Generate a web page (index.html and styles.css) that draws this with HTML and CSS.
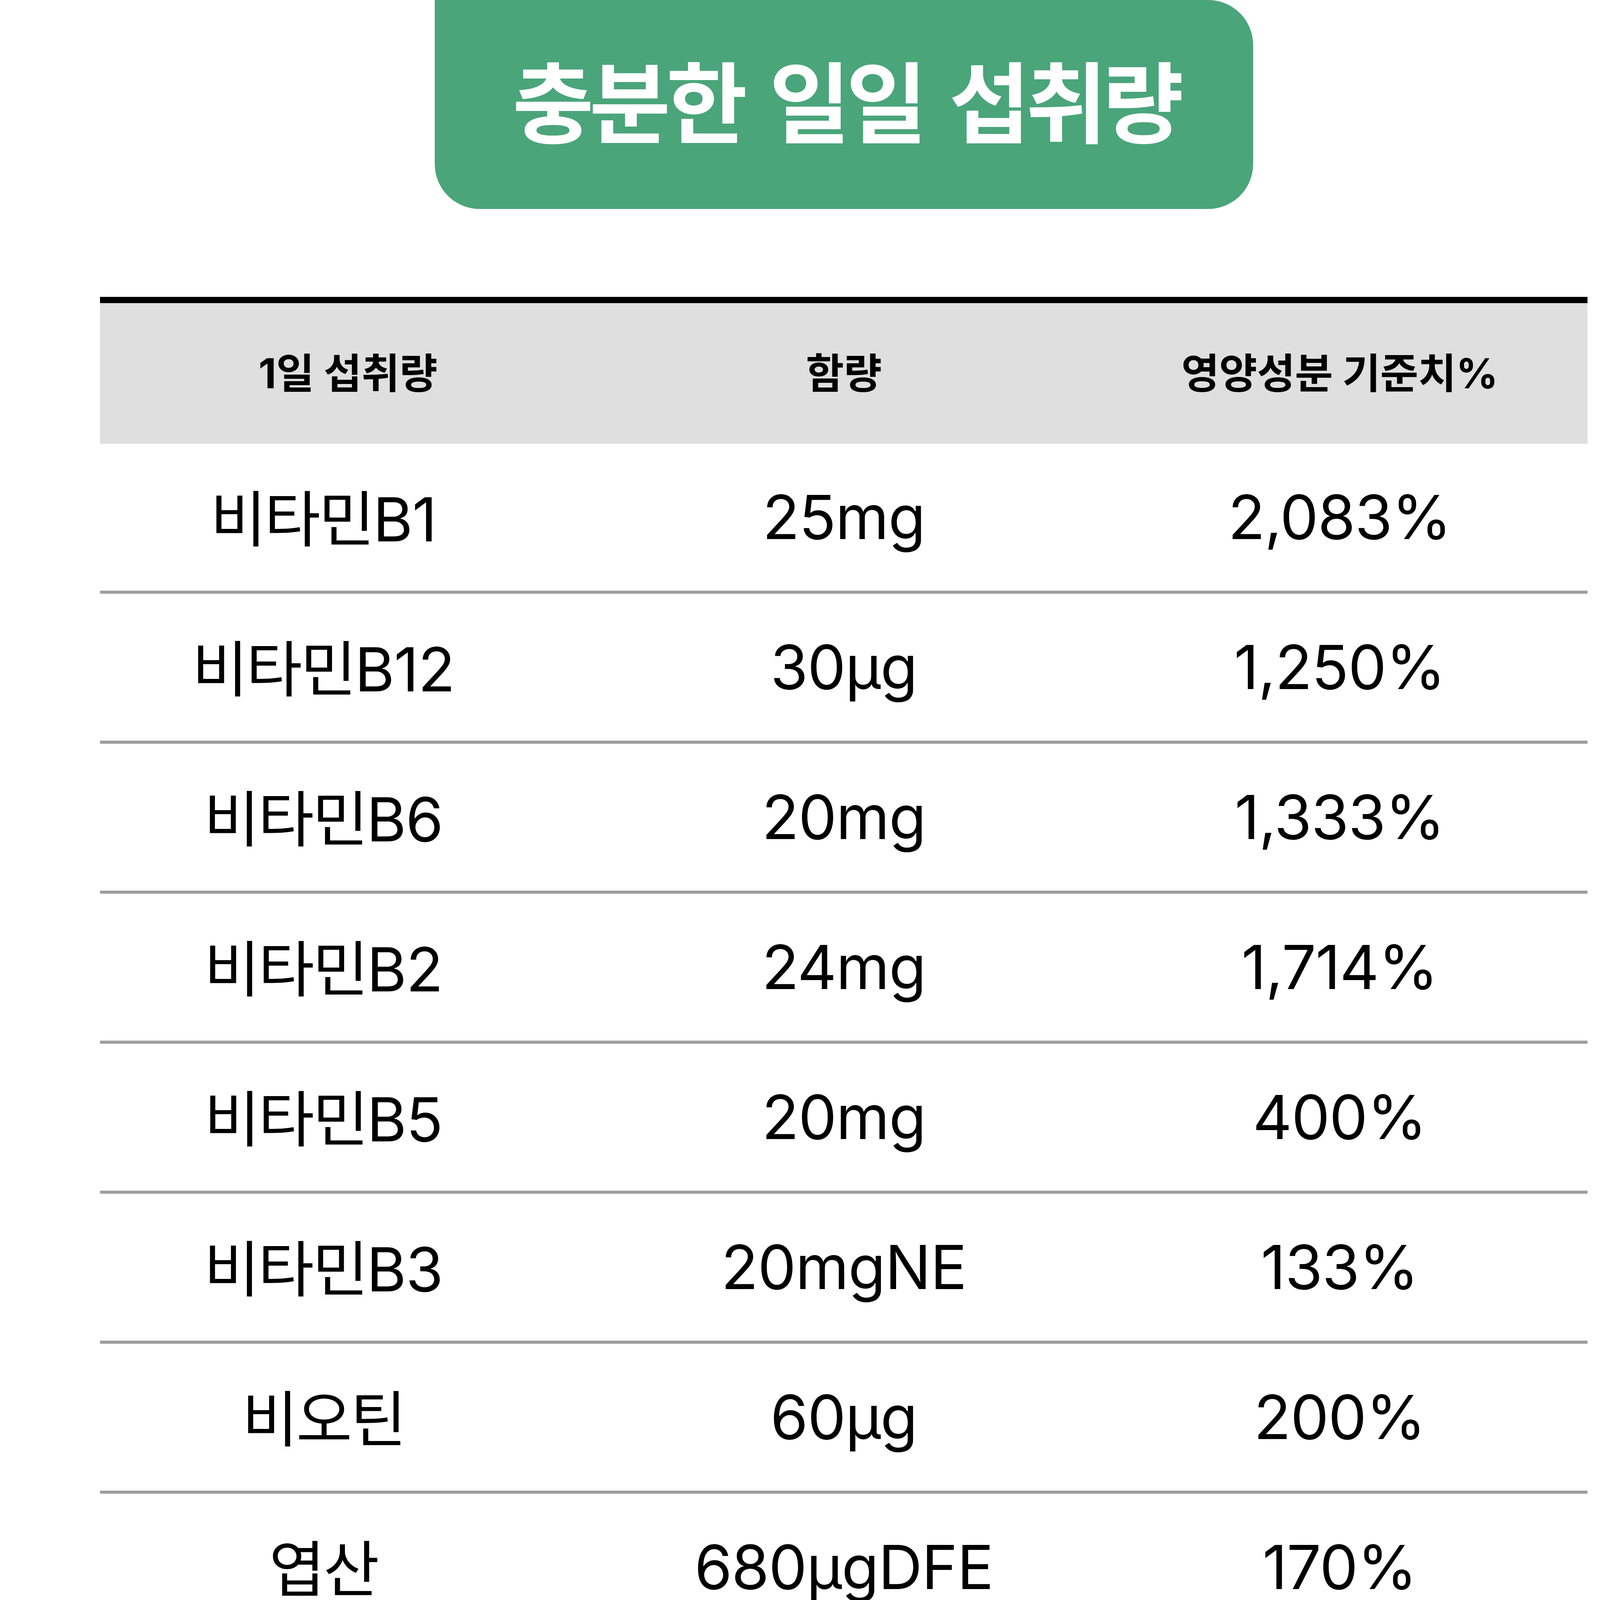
FILE: index.html
```html
<!DOCTYPE html>
<html lang="ko">
<head>
<meta charset="utf-8">
<title>충분한 일일 섭취량</title>
<link rel="stylesheet" href="styles.css">
</head>
<body>
<div class="page">
  <div class="title-wrap">
    <div class="title">충분한 일일 섭취량</div>
  </div>
  <div class="table">
    <div class="head">
      <div class="hc">1일 섭취량</div>
      <div class="hc">함량</div>
      <div class="hc">영양성분 기준치%</div>
    </div>
    <div class="row"><div class="c name"><span class="h">비타민</span>B1</div><div class="c">25mg</div><div class="c">2,083%</div></div>
    <div class="row"><div class="c name"><span class="h">비타민</span>B12</div><div class="c">30μg</div><div class="c">1,250%</div></div>
    <div class="row"><div class="c name"><span class="h">비타민</span>B6</div><div class="c">20mg</div><div class="c">1,333%</div></div>
    <div class="row"><div class="c name"><span class="h">비타민</span>B2</div><div class="c">24mg</div><div class="c">1,714%</div></div>
    <div class="row"><div class="c name"><span class="h">비타민</span>B5</div><div class="c">20mg</div><div class="c">400%</div></div>
    <div class="row"><div class="c name"><span class="h">비타민</span>B3</div><div class="c">20mgNE</div><div class="c">133%</div></div>
    <div class="row"><div class="c name"><span class="h">비오틴</span></div><div class="c">60μg</div><div class="c">200%</div></div>
    <div class="row"><div class="c name"><span class="h">엽산</span></div><div class="c">680μgDFE</div><div class="c">170%</div></div>
    <div class="row"><div class="c name"><span class="h">비타민</span>C</div><div class="c">1,000mg</div><div class="c">1,000%</div></div>
    <div class="row"><div class="c name">EPA<span class="h">와</span> DHA<span class="h">의 합</span></div><div class="c">900mg</div><div class="c">-</div></div>
    <div class="row"><div class="c name"><span class="h">비타민</span>D</div><div class="c">10μg</div><div class="c">100%</div></div>
    <div class="row"><div class="c name"><span class="h">비타민</span>E</div><div class="c">11mg a-TE</div><div class="c">100%</div></div>
    <div class="row"><div class="c name"><span class="h">마그네슘</span></div><div class="c">150mg</div><div class="c">48%</div></div>
    <div class="row"><div class="c name"><span class="h">칼슘</span></div><div class="c">300mg</div><div class="c">43%</div></div>
    <div class="row"><div class="c name"><span class="h">아연</span></div><div class="c">6mg</div><div class="c">71%</div></div>
    <div class="row"><div class="c name"><span class="h">비타민</span>D</div><div class="c">10μg</div><div class="c">100%</div></div>
  </div>
</div>
</body>
</html>
```

FILE: styles.css
```css
* { box-sizing: border-box; }
html, body { margin: 0; padding: 0; background: #ffffff; }
body {
  font-family: Inter, "Noto Sans CJK KR", sans-serif;
  color: #000000;
}
.page {
  width: 4320px;
  display: flex;
  flex-direction: column;
  align-items: center;
}
.title-wrap {
  width: 2095px;
  height: 535px;
  background: #4aa57a;
  border-radius: 0 115px 115px 115px;
  display: flex;
  align-items: center;
  justify-content: center;
  padding-bottom: 34px;
}
.title {
  color: #ffffff;
  font-family: "Noto Sans CJK KR", sans-serif;
  font-weight: 700;
  font-size: 226px;
  letter-spacing: -0.05em;
  word-spacing: 15px;
  line-height: 1;
  padding-left: 0.05em;
}
.table {
  width: 3808px;
  margin-top: 225px;
  border-top: 16px solid #000000;
}
.head {
  height: 360px;
  background: #dfdfdf;
  display: grid;
  grid-template-columns: 1fr 1fr 1fr;
  align-items: center;
}
.hc {
  text-align: center;
  font-weight: 700;
  font-size: 106px;
  letter-spacing: -0.005em;
  line-height: 1;
}
.row {
  height: 384px;
  border-bottom: 8px solid #9e9e9e;
  display: grid;
  grid-template-columns: 1fr 1fr 1fr;
  align-items: center;
}
.c {
  text-align: center;
  font-size: 156px;
  font-weight: 400;
  letter-spacing: -0.01em;
  line-height: 1.2;
  white-space: nowrap;
}
.c.name {
  padding-right: 126px;
}
.h {
  font-family: "Noto Sans CJK KR", sans-serif;
  letter-spacing: -0.03em;
}
```
